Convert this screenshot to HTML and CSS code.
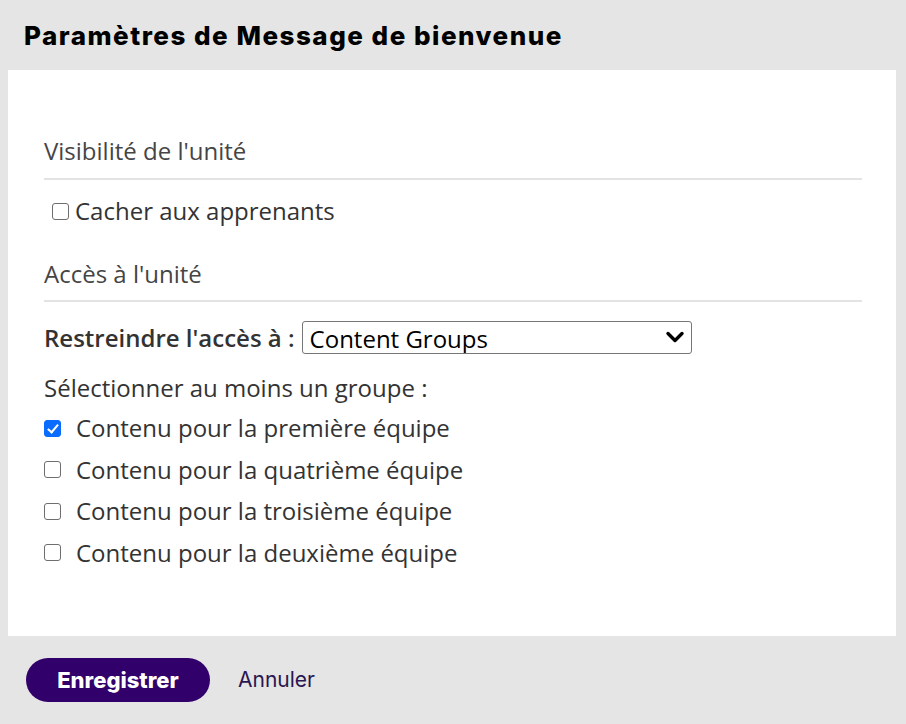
FILE: index.html
```html
<!DOCTYPE html>
<html lang="fr">
<head>
<meta charset="utf-8">
<title>Paramètres de Message de bienvenue</title>
<link rel="stylesheet" href="styles.css">
</head>
<body>
<div class="modal">
  <header class="modal-header">
    <h1 class="modal-title">Paramètres de Message de bienvenue</h1>
  </header>
  <div class="modal-body">
    <h2 class="section-title">Visibilité de l'unité</h2>
    <label class="check-row check-row-small">
      <input type="checkbox" class="check">
      <span>Cacher aux apprenants</span>
    </label>

    <h2 class="section-title section-title-second">Accès à l'unité</h2>
    <div class="restrict-row">
      <label class="restrict-label" for="restrict">Restreindre l'accès à :</label>
      <div class="select-wrap">
        <select id="restrict" class="select">
          <option>Content Groups</option>
        </select>
        <svg class="chevron" width="20" height="14" viewBox="0 0 20 14" aria-hidden="true">
          <path d="M3 3.5 L10 10.5 L17 3.5" fill="none" stroke="#000" stroke-width="3.4" stroke-linecap="round" stroke-linejoin="round"/>
        </svg>
      </div>
    </div>
    <p class="group-hint">Sélectionner au moins un groupe :</p>
    <ul class="group-list">
      <li><label class="check-row"><input type="checkbox" class="check" checked><span>Contenu pour la première équipe</span></label></li>
      <li><label class="check-row"><input type="checkbox" class="check"><span>Contenu pour la quatrième équipe</span></label></li>
      <li><label class="check-row"><input type="checkbox" class="check"><span>Contenu pour la troisième équipe</span></label></li>
      <li><label class="check-row"><input type="checkbox" class="check"><span>Contenu pour la deuxième équipe</span></label></li>
    </ul>
  </div>
  <footer class="modal-footer">
    <button class="btn-primary" type="button">Enregistrer</button>
    <button class="btn-link" type="button">Annuler</button>
  </footer>
</div>
</body>
</html>
```

FILE: styles.css
```css
* { box-sizing: border-box; }

html, body {
  margin: 0;
  padding: 0;
  background: #e5e5e5;
}

body {
  font-family: "Open Sans", "Noto Sans", sans-serif;
  color: #333;
}

.modal {
  width: 906px;
  height: 724px;
  display: flex;
  flex-direction: column;
}

.modal-header {
  height: 70px;
  display: flex;
  align-items: center;
  padding-left: 24px;
}

.modal-title {
  margin: 0;
  font-family: Inter, "Open Sans", sans-serif;
  font-weight: 800;
  font-size: 26px;
  color: #000;
  letter-spacing: 1.5px;
}

.modal-body {
  background: #fff;
  margin: 0 10px 0 8px;
  padding: 67px 34px 69px 36px;
}

.section-title {
  margin: 0;
  font-size: 24px;
  line-height: 28px;
  font-weight: 400;
  color: #454545;
  padding-bottom: 13px;
  border-bottom: 2px solid #e3e3e3;
}

.section-title-second {
  margin-top: 35px;
  padding-bottom: 12px;
}

.check-row {
  display: flex;
  align-items: center;
  font-size: 24px;
  line-height: 28px;
  color: #333;
  gap: 15px;
}

.check-row-small {
  margin-top: 17px;
  padding-left: 8px;
  gap: 6px;
}

.check {
  appearance: none;
  -webkit-appearance: none;
  margin: 0;
  width: 17px;
  height: 17px;
  border: 1.5px solid #6e6e6e;
  border-radius: 3px;
  background: #fff;
  position: relative;
  flex: none;
}

.check:checked {
  background: #0a6cff;
  border-color: #0a6cff;
}

.check:checked::after {
  content: "";
  position: absolute;
  left: 4.5px;
  top: 1px;
  width: 4px;
  height: 9px;
  border: solid #fff;
  border-width: 0 2.5px 2.5px 0;
  transform: rotate(40deg);
}

.restrict-row {
  margin-top: 19px;
  display: flex;
  align-items: center;
  gap: 7px;
}

.restrict-label {
  font-size: 24px;
  font-weight: 600;
  color: #333;
  line-height: 28px;
}

.select-wrap {
  position: relative;
  width: 390px;
  height: 33px;
}

.select {
  appearance: none;
  -webkit-appearance: none;
  width: 100%;
  height: 100%;
  border: 1.5px solid #767676;
  border-radius: 3px;
  background: #fff;
  font-family: "Open Sans", sans-serif;
  font-size: 24px;
  color: #000;
  padding: 0 7px;
}

.chevron {
  position: absolute;
  right: 7px;
  top: 9px;
  pointer-events: none;
}

.group-hint {
  margin: 20px 0 0;
  font-size: 24px;
  line-height: 28px;
  color: #333;
}

.group-list {
  list-style: none;
  margin: 12px 0 0;
  padding: 0;
  display: flex;
  flex-direction: column;
  gap: 13.5px;
}

.modal-footer {
  display: flex;
  align-items: center;
  padding: 22px 0 0 26px;
  gap: 28px;
}

.btn-primary {
  height: 44px;
  width: 184px;
  border: none;
  border-radius: 22px;
  background: #32006b;
  color: #fff;
  font-family: Inter, "Open Sans", sans-serif;
  font-weight: 800;
  font-size: 22px;
  cursor: pointer;
}

.btn-link {
  border: none;
  background: none;
  padding: 0;
  font-family: Inter, "Open Sans", sans-serif;
  font-size: 21px;
  color: #2a1650;
  cursor: pointer;
}
```
